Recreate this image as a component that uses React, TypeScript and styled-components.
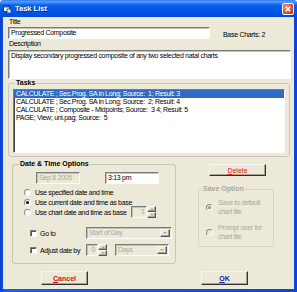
import React from "react";
import styled, { createGlobalStyle, css } from "styled-components";

const FACE = "#ECE9D8";
const GREY = "#ACA899";

const GlobalStyle = createGlobalStyle`
  html, body {
    margin: 0;
    padding: 0;
    background: #fff;
  }
  body {
    font-family: "Liberation Sans", Arial, sans-serif;
  }
`;

const sunken = css`
  box-sizing: border-box;
  border: 1px solid;
  border-color: #7b7b7b #fbfbfb #fbfbfb #7b7b7b;
  box-shadow: inset 1px 1px 0 #c4c1b4;
`;

const raised = css`
  box-sizing: border-box;
  border: 1px solid;
  border-color: #f8f8f8 #5a5a5a #5a5a5a #f8f8f8;
  box-shadow: inset -1px -1px 0 #a7a495;
  background: ${FACE};
`;

const Window = styled.div`
  width: 297px;
  height: 292px;
  display: flex;
  flex-direction: column;
  background: linear-gradient(to right, #0A3FD0, #1660EC 2%, #0B47D6 100%);
  border-radius: 4px 4px 0 0;
  overflow: hidden;
  font-family: "Liberation Sans", Arial, sans-serif;
  font-size: 7px;
  letter-spacing: -0.3px;
  color: #000;
`;

const TitleBar = styled.div`
  height: 17px;
  flex: none;
  display: flex;
  align-items: center;
  padding: 0 3px;
  background: linear-gradient(
    to bottom,
    #2B7CF6 0%,
    #5A9CFB 10%,
    #0C60EB 30%,
    #0056E5 65%,
    #0049D9 100%
  );
`;

const TitleIcon = styled.svg`
  width: 8px;
  height: 8px;
  flex: none;
`;

const TitleText = styled.div`
  margin-left: 4px;
  color: #fff;
  font-weight: bold;
  font-size: 7.5px;
  letter-spacing: 0;
  text-shadow: 1px 1px 0 #0A2A8C;
`;

const CloseButton = styled.div`
  margin-left: auto;
  margin-top: 1px;
  width: 12px;
  height: 12px;
  box-sizing: border-box;
  border: 1px solid #fff;
  border-radius: 2px;
  background: radial-gradient(circle at 35% 35%, #F09A7E, #D8502A 60%, #B83311);
  display: flex;
  align-items: center;
  justify-content: center;
`;

const Client = styled.div`
  flex: 1;
  margin: 0 3px 3px;
  background: ${FACE};
  display: flex;
  flex-direction: column;
  padding: 0 3px 0 5px;
`;

const FieldLabel = styled.div<{ $top: number }>`
  margin: ${(p) => p.$top}px 0 0 1px;
  height: 8px;
  line-height: 8px;
`;

const Row = styled.div<{ $top?: number; $h?: number }>`
  display: flex;
  align-items: center;
  margin-top: ${(p) => p.$top ?? 0}px;
  height: ${(p) => (p.$h ? `${p.$h}px` : "auto")};
`;

const TextBox = styled.div<{ $w: number; $h: number; $left?: number; $disabled?: boolean }>`
  ${sunken};
  flex: none;
  width: ${(p) => p.$w}px;
  height: ${(p) => p.$h}px;
  margin-left: ${(p) => p.$left ?? 0}px;
  padding-left: 2px;
  line-height: ${(p) => Math.min(p.$h - 2, 9)}px;
  background: ${(p) => (p.$disabled ? FACE : "#fff")};
  color: ${(p) => (p.$disabled ? GREY : "#000")};
  white-space: nowrap;
  overflow: hidden;
`;

const BaseCharts = styled.div`
  margin: 2px 0 0 13px;
`;

const Group = styled.fieldset<{ $w: number; $h: number; $left?: number; $top?: number; $disabled?: boolean }>`
  margin: ${(p) => p.$top ?? 0}px 0 0 ${(p) => p.$left ?? 0}px;
  padding: 0;
  min-width: 0;
  width: ${(p) => p.$w}px;
  height: ${(p) => p.$h}px;
  box-sizing: border-box;
  border: 1px solid ${(p) => (p.$disabled ? "#D6D3C4" : "#C9C6B6")};
  border-radius: 3px;
  display: flex;
  flex-direction: column;
  flex: none;
`;

const Legend = styled.legend<{ $indent: number; $disabled?: boolean }>`
  padding: 0 1px;
  margin-left: ${(p) => p.$indent}px;
  font-weight: bold;
  letter-spacing: 0;
  line-height: 8px;
  height: 8px;
  color: ${(p) => (p.$disabled ? GREY : "#000")};
`;

const ListBox = styled.div`
  ${sunken};
  height: 64px;
  margin: 2px 4px 0 4px;
  background: #fff;
  box-shadow: inset 1px 1px 0 #404040;
`;

const ListRow = styled.div<{ $selected?: boolean }>`
  height: 8px;
  line-height: 8px;
  padding-left: 2px;
  white-space: pre;
  background: ${(p) => (p.$selected ? "#316AC5" : "transparent")};
  color: ${(p) => (p.$selected ? "#fff" : "#000")};
`;

const Middle = styled.div`
  display: flex;
  margin-top: 3px;
`;

const RightColumn = styled.div`
  display: flex;
  flex-direction: column;
  margin-left: 22px;
  width: 76px;
`;

const Button = styled.div<{ $w: number; $h: number; $left?: number; $top?: number; $color: string; $bold?: boolean }>`
  ${raised};
  border-color: #f4f4f4 #303030 #303030 #f4f4f4;
  flex: none;
  width: ${(p) => p.$w}px;
  height: ${(p) => p.$h}px;
  margin: ${(p) => p.$top ?? 0}px 0 0 ${(p) => p.$left ?? 0}px;
  display: flex;
  align-items: center;
  justify-content: center;
  color: ${(p) => p.$color};
  font-weight: ${(p) => (p.$bold ? "bold" : "normal")};
  letter-spacing: 0;
  u {
    text-decoration: underline;
  }
`;

const RadioDot = styled.span<{ $checked?: boolean; $disabled?: boolean }>`
  flex: none;
  width: 7px;
  height: 7px;
  box-sizing: border-box;
  border-radius: 50%;
  border: 1px solid;
  border-color: #8a8a8a #f6f6f6 #f6f6f6 #8a8a8a;
  background: ${(p) => (p.$disabled ? FACE : "#fff")};
  display: flex;
  align-items: center;
  justify-content: center;
  &::after {
    content: "";
    width: 3px;
    height: 3px;
    border-radius: 50%;
    background: ${(p) => (p.$checked ? (p.$disabled ? "#9a978a" : "#000") : "transparent")};
  }
`;

const OptionRow = styled.div<{ $top: number; $left: number; $gap: number }>`
  display: flex;
  align-items: center;
  height: 10px;
  margin: ${(p) => p.$top}px 0 0 ${(p) => p.$left}px;
  gap: ${(p) => p.$gap}px;
`;

const OptionText = styled.span<{ $disabled?: boolean; $w?: number }>`
  color: ${(p) => (p.$disabled ? GREY : "#000")};
  line-height: 9px;
  white-space: nowrap;
  width: ${(p) => (p.$w ? `${p.$w}px` : "auto")};
  flex: none;
`;

const WrapText = styled.span`
  color: ${GREY};
  line-height: 9px;
  width: 52px;
`;

const CheckBox = styled.span`
  ${sunken};
  flex: none;
  width: 7px;
  height: 7px;
  background: #fff;
  box-shadow: inset 1px 1px 0 #555;
`;

const Spin = styled.div<{ $left: number }>`
  display: flex;
  flex: none;
  height: 12px;
  margin-left: ${(p) => p.$left}px;
`;

const SpinField = styled.div<{ $w: number }>`
  ${sunken};
  width: ${(p) => p.$w}px;
  background: ${FACE};
  color: ${GREY};
  text-align: right;
  padding-right: 2px;
  line-height: 10px;
`;

const SpinButtons = styled.div`
  display: flex;
  flex-direction: column;
  width: 9px;
`;

const SpinButton = styled.div`
  ${raised};
  flex: 1;
  display: flex;
  align-items: center;
  justify-content: center;
`;

const Arrow = styled.span<{ $dir: "up" | "down" }>`
  width: 0;
  height: 0;
  border-left: 2px solid transparent;
  border-right: 2px solid transparent;
  ${(p) =>
    p.$dir === "up"
      ? `border-bottom: 2px solid ${GREY};`
      : `border-top: 2px solid ${GREY};`}
`;

const Combo = styled.div<{ $w: number; $left: number }>`
  ${sunken};
  flex: none;
  width: ${(p) => p.$w}px;
  height: 12px;
  margin-left: ${(p) => p.$left}px;
  display: flex;
  background: ${FACE};
  padding: 0 1px 0 0;
`;

const ComboText = styled.div`
  flex: 1;
  color: ${GREY};
  padding-left: 2px;
  line-height: 10px;
  white-space: nowrap;
`;

const ComboButton = styled.div`
  ${raised};
  width: 10px;
  height: 8px;
  margin-top: 1px;
  display: flex;
  align-items: center;
  justify-content: center;
`;

const BottomRow = styled.div`
  display: flex;
  margin-top: 7px;
`;

function Radio({ checked, disabled }: { checked?: boolean; disabled?: boolean }) {
  return <RadioDot $checked={checked} $disabled={disabled} />;
}

function SpinBox({ value, left, width }: { value: string; left: number; width: number }) {
  return (
    <Spin $left={left}>
      <SpinField $w={width}>{value}</SpinField>
      <SpinButtons>
        <SpinButton>
          <Arrow $dir="up" />
        </SpinButton>
        <SpinButton>
          <Arrow $dir="down" />
        </SpinButton>
      </SpinButtons>
    </Spin>
  );
}

function ComboBox({ text, width, left }: { text: string; width: number; left: number }) {
  return (
    <Combo $w={width} $left={left}>
      <ComboText>{text}</ComboText>
      <ComboButton>
        <Arrow $dir="down" />
      </ComboButton>
    </Combo>
  );
}

const tasks = [
  "CALCULATE ; Sec.Prog. SA in Long; Source:  1; Result: 3",
  "CALCULATE ; Sec.Prog. SA in Long; Source:  2; Result: 4",
  "CALCULATE ; Composite - Midpoints; Source:  3 4; Result: 5",
  "PAGE; View; uni.pag; Source:  5",
];

export default function App() {
  return (
    <>
      <GlobalStyle />
      <Window>
        <TitleBar>
          <TitleIcon viewBox="0 0 8 8">
            <rect x="0.5" y="0.5" width="6" height="6" fill="#fff" stroke="#1C3D8C" strokeWidth="1" />
            <rect x="1" y="1" width="5" height="1.5" fill="#2A5CC8" />
            <rect x="4" y="4" width="4" height="4" fill="#D9E4F7" stroke="#1C3D8C" strokeWidth="0.8" />
          </TitleIcon>
          <TitleText>Task List</TitleText>
          <CloseButton>
            <svg width="6" height="6" viewBox="0 0 6 6">
              <path d="M0.8 0.8 L5.2 5.2 M5.2 0.8 L0.8 5.2" stroke="#fff" strokeWidth="1.4" />
            </svg>
          </CloseButton>
        </TitleBar>

        <Client>
          <FieldLabel $top={1}>Title</FieldLabel>
          <Row $top={1}>
            <TextBox $w={202} $h={12}>Progressed Composite</TextBox>
            <BaseCharts>Base Charts: 2</BaseCharts>
          </Row>

          <FieldLabel $top={1}>Description</FieldLabel>
          <Row $top={2}>
            <TextBox $w={283} $h={29}>
              Display secondary progressed composite of any two selected natal charts
            </TextBox>
          </Row>

          <Group $w={282} $h={78}>
            <Legend $indent={6}>Tasks</Legend>
            <ListBox>
              {tasks.map((t, i) => (
                <ListRow key={i} $selected={i === 0}>
                  {t}
                </ListRow>
              ))}
            </ListBox>
          </Group>

          <Middle>
            <Group $w={164} $h={104} $left={4}>
              <Legend $indent={6}>Date &amp; Time Options</Legend>
              <Row $top={4}>
                <TextBox $w={44} $h={12} $left={23} $disabled>
                  Sep 8 2005
                </TextBox>
                <TextBox $w={54} $h={12} $left={25}>
                  3:13 pm
                </TextBox>
              </Row>
              <OptionRow $top={3} $left={11} $gap={4}>
                <Radio />
                <OptionText>Use specified date and time</OptionText>
              </OptionRow>
              <OptionRow $top={0} $left={11} $gap={4}>
                <Radio checked />
                <OptionText>Use current date and time as base</OptionText>
              </OptionRow>
              <OptionRow $top={0} $left={11} $gap={4}>
                <Radio />
                <OptionText>Use chart date and time as base</OptionText>
                <SpinBox value="1" left={1} width={16} />
              </OptionRow>
              <OptionRow $top={11} $left={17} $gap={3}>
                <CheckBox />
                <OptionText $w={46}>Go to</OptionText>
                <ComboBox text="Start of Day" width={86} left={-3} />
              </OptionRow>
              <OptionRow $top={7} $left={17} $gap={3}>
                <CheckBox />
                <OptionText $w={46}>Adjust date by</OptionText>
                <SpinBox value="0" left={-3} width={12} />
                <ComboBox text="Days" width={54} left={5} />
              </OptionRow>
            </Group>

            <RightColumn>
              <Button $w={57} $h={12} $left={11} $top={4} $color="#E0201A">
                <span>
                  <u>D</u>elete
                </span>
              </Button>
              <Group $w={76} $h={62} $top={9} $disabled>
                <Legend $indent={3} $disabled>
                  Save Option
                </Legend>
                <OptionRow $top={5} $left={7} $gap={5} style={{ height: 18 }}>
                  <Radio checked disabled />
                  <WrapText>Save to default chart file</WrapText>
                </OptionRow>
                <OptionRow $top={7} $left={7} $gap={5} style={{ height: 18 }}>
                  <Radio disabled />
                  <WrapText>Prompt user for chart file</WrapText>
                </OptionRow>
              </Group>
            </RightColumn>
          </Middle>

          <BottomRow>
            <Button $w={47} $h={14} $left={33} $color="#D01010" $bold>
              <span>
                <u>C</u>ancel
              </span>
            </Button>
            <Button $w={47} $h={14} $left={113} $color="#1020B0" $bold>
              <span>
                <u>O</u>K
              </span>
            </Button>
          </BottomRow>
        </Client>
      </Window>
    </>
  );
}
